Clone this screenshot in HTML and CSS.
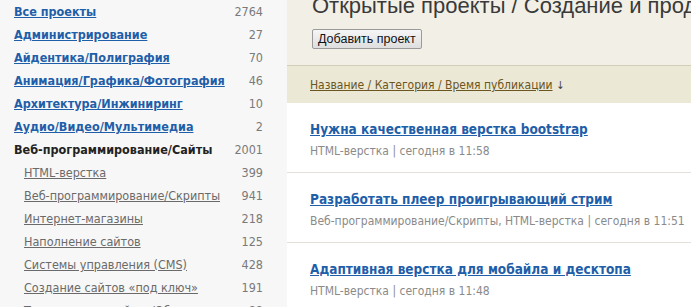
FILE: index.html
```html
<!DOCTYPE html>
<html lang="ru">
<head>
    <meta charset="UTF-8">
    <title>Открытые проекты</title>
    <link rel="stylesheet" href="styles.css">
</head>
<body>
    <div class="layout">
      <div class="sidebar">
        <ul class="cats">
          <li class="cat"><a href="#">Все проекты</a><span class="num">2764</span></li>
          <li class="cat"><a href="#">Администрирование</a><span class="num">27</span></li>
          <li class="cat"><a href="#">Айдентика/Полиграфия</a><span class="num">70</span></li>
          <li class="cat"><a href="#">Анимация/Графика/Фотография</a><span class="num">46</span></li>
          <li class="cat"><a href="#">Архитектура/Инжиниринг</a><span class="num">10</span></li>
          <li class="cat"><a href="#">Аудио/Видео/Мультимедиа</a><span class="num">2</span></li>
          <li class="cat active"><span class="name">Веб-программирование/Сайты</span><span class="num">2001</span></li>
          <li class="sub"><a href="#">HTML-верстка</a><span class="num">399</span></li>
          <li class="sub"><a href="#">Веб-программирование/Скрипты</a><span class="num">941</span></li>
          <li class="sub"><a href="#">Интернет-магазины</a><span class="num">218</span></li>
          <li class="sub"><a href="#">Наполнение сайтов</a><span class="num">125</span></li>
          <li class="sub"><a href="#">Системы управления (CMS)</a><span class="num">428</span></li>
          <li class="sub"><a href="#">Создание сайтов «под ключ»</a><span class="num">191</span></li>
          <li class="sub"><a href="#">Тестирование сайтов/Обслуживание</a><span class="num">88</span></li>
        </ul>
      </div>

      <div class="main">
        <div class="head">
          <h1>Открытые проекты / Создание и продвижение сайтов</h1>
          <button class="add-btn">Добавить проект</button>
        </div>
        <div class="sortbar">
          <a href="#">Название / Категория / Время публикации</a> <span class="arrow">↓</span>
        </div>
        <div class="project">
          <a class="title" href="#">Нужна качественная верстка bootstrap</a>
          <div class="meta">HTML-верстка | сегодня в 11:58</div>
        </div>
        <div class="project">
          <a class="title" href="#">Разработать плеер проигрывающий стрим</a>
          <div class="meta">Веб-программирование/Скрипты, HTML-верстка | сегодня в 11:51</div>
        </div>
        <div class="project">
          <a class="title" href="#">Адаптивная верстка для мобайла и десктопа</a>
          <div class="meta">HTML-верстка | сегодня в 11:48</div>
        </div>
      </div>
    </div>
</body>
</html>
```

FILE: styles.css
```css
body {
    margin: 0;
    background-color: #fff;
    font-family: "DejaVu Sans Condensed", "DejaVu Sans", sans-serif;
    overflow: hidden;
}

.layout {
    display: flex;
    min-height: 100vh;
}

.sidebar {
    width: 287px;
    flex-shrink: 0;
    background-color: #f7f7f7;
}

.cats {
    list-style: none;
    margin: 0;
    padding: 0 24px 0 14px;
}

.cats li {
    display: flex;
    justify-content: space-between;
    height: 23px;
    line-height: 23px;
    font-size: 12.5px;
}

.cat a {
    color: #1f5ea8;
    font-weight: bold;
}

.cat.active .name {
    color: #222;
    font-weight: bold;
}

.sub {
    padding-left: 10px;
}

.sub a {
    color: #6a6a6a;
}

.num {
    color: #7a7a7a;
}

.main {
    flex: 1;
    min-width: 0;
    overflow: hidden;
}

.head {
    background-color: #f2f0e6;
    border-bottom: 1px solid #d2cfb6;
    padding: 0 25px 16px 25px;
}

.head h1 {
    margin: -6px 0 10px 0;
    font-family: "Liberation Sans", Arial, sans-serif;
    font-weight: normal;
    font-size: 22px;
    line-height: 24px;
    color: #3a3a3a;
    white-space: nowrap;
}

.add-btn {
    height: 20px;
    padding: 0 5px;
    font-family: "Liberation Sans", Arial, sans-serif;
    font-size: 12.5px;
    color: #111;
    background: linear-gradient(#f6f6f6, #dedede);
    border: 1px solid #9a9a9a;
    border-radius: 2px;
}

.sortbar {
    background-color: #ebe8d6;
    height: 37px;
    line-height: 38px;
    padding-left: 23px;
    font-size: 12px;
}

.sortbar a {
    color: #6b5520;
}

.sortbar .arrow {
    color: #444;
    font-size: 11px;
}

.project {
    padding: 17px 23px 0 23px;
    height: 52px;
    border-bottom: 1px solid #e2e0d8;
}

.project .title {
    display: block;
    color: #1f5ea8;
    font-weight: bold;
    font-size: 13.5px;
    line-height: 19px;
}

.project .meta {
    margin-top: 4px;
    color: #8a8a8a;
    font-size: 12px;
    line-height: 16px;
    white-space: nowrap;
}
```
